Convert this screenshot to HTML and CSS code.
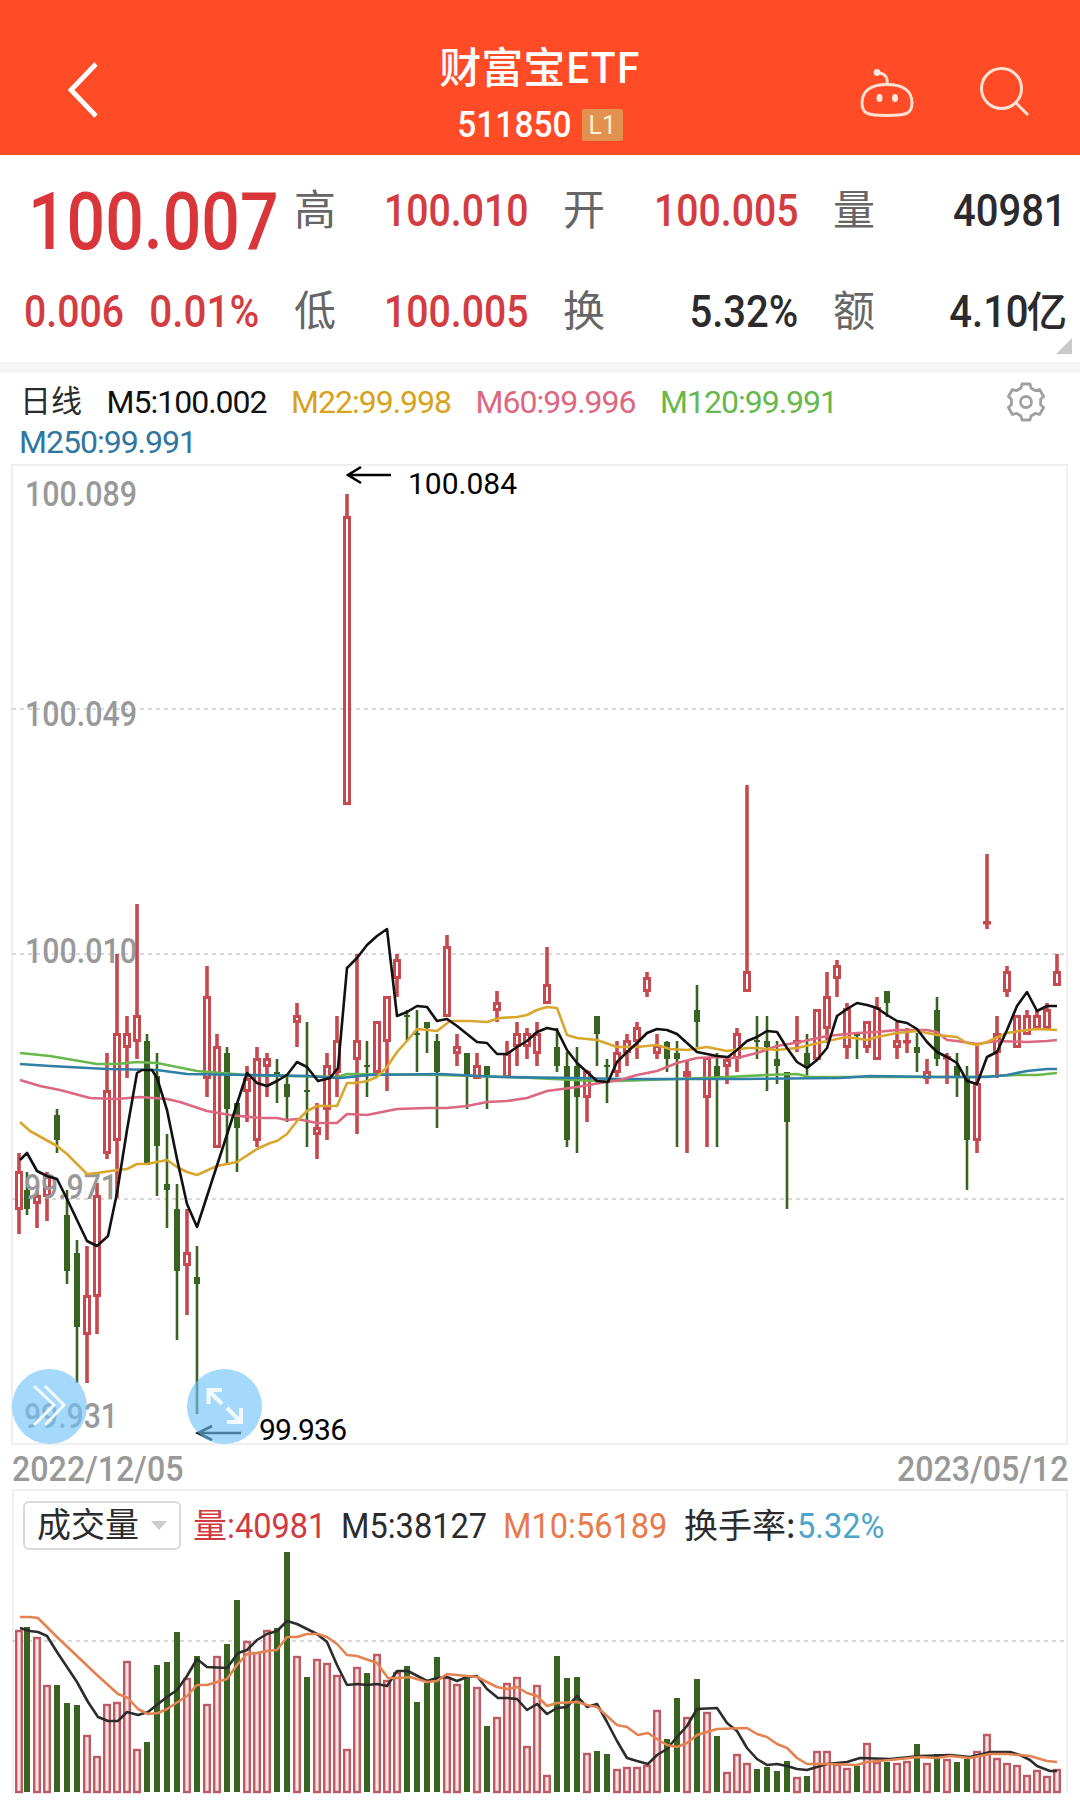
FILE: index.html
```html
<!DOCTYPE html>
<html lang="zh-CN">
<head>
  <meta charset="UTF-8" />
  <title>财富宝ETF 511850</title>
  <meta name="viewport" content="width=device-width, initial-scale=1" />
  <link rel="stylesheet" href="styles.css">
</head>
<body>
  <header class="topbar">
    <svg class="back" viewBox="0 0 36 58"><path d="M31 3 L6 29 L31 55" /></svg>
    <div class="title">
      <h1>财富宝ETF</h1>
      <div class="code"><span>511850</span><em>L1</em></div>
    </div>
    <div class="tools">
      <svg class="bot" viewBox="0 0 56 50">
        <path d="M28 17 C29 10 26 6 18 6" />
        <path d="M28 17.500 C44 17.500 53 24 53 36 C53 47 47 48.500 28 48.500 C9 48.500 3 47 3 36 C3 24 12 17.500 28 17.500 Z" />
        <circle class="dot" cx="18" cy="5.500" r="3.4" />
        <ellipse class="dot" cx="20.500" cy="31" rx="3" ry="4" />
        <ellipse class="dot" cx="36" cy="31" rx="3" ry="4" />
      </svg>
      <svg class="search" viewBox="0 0 52 52"><circle cx="22.500" cy="21.500" r="20" /><path d="M36.500 35.500 L49 48" /></svg>
    </div>
  </header>

  <section class="quote">
    <div class="price"><b>100.007</b></div>
    <div class="cell"><label>高</label><span class="num up">100.010</span></div>
    <div class="cell"><label>开</label><span class="num up">100.005</span></div>
    <div class="cell"><label>量</label><span class="num">40981</span></div>
    <div class="change"><span class="num up">0.006</span><span class="num up">0.01%</span></div>
    <div class="cell"><label>低</label><span class="num up">100.005</span></div>
    <div class="cell"><label>换</label><span class="num">5.32%</span></div>
    <div class="cell"><label>额</label><span class="num">4.10<i>亿</i></span></div>
    <span class="more"></span>
  </section>

  <section class="legend">
    <div class="names">
      <span class="period">日线</span>
      <span class="m5">M5:100.002</span>
      <span class="m22">M22:99.998</span>
      <span class="m60">M60:99.996</span>
      <span class="m120">M120:99.991</span>
      <span class="m250">M250:99.991</span>
    </div>
    <svg class="gear" viewBox="0 0 42 42">
      <path d="M17 3 H25 L26 7 L30.6 9.7 L34.6 8.5 L38.6 15.5 L35.6 18.3 V23.7 L38.6 26.5 L34.6 33.5 L30.6 32.3 L26 35 L25 39 H17 L16 35 L11.4 32.3 L7.4 33.5 L3.4 26.5 L6.4 23.7 V18.3 L3.4 15.5 L7.4 8.5 L11.4 9.7 L16 7 Z" />
      <circle cx="21" cy="21" r="5.5" />
    </svg>
  </section>

  <section class="kline">
    <svg id="kline" viewBox="0 464 1080 982">
      <rect class="frame" x="12" y="465" width="1055" height="979" />
      <path class="grid" d="M12 709 H1066 M12 954 H1066 M12 1199 H1066" />
      <g id="candles"></g>
      <g class="axis">
        <text x="25" y="506" textLength="112" lengthAdjust="spacingAndGlyphs">100.089</text>
        <text x="25" y="726" textLength="112" lengthAdjust="spacingAndGlyphs">100.049</text>
        <text x="25" y="963" textLength="112" lengthAdjust="spacingAndGlyphs">100.010</text>
        <text x="24" y="1199" textLength="94" lengthAdjust="spacingAndGlyphs">99.971</text>
        <text x="24" y="1428" textLength="94" lengthAdjust="spacingAndGlyphs">99.931</text>
      </g>
      <g id="averages"></g>
      <g class="mark">
        <path d="M391 475 H349 M361 467 L348 475 L361 483" />
        <path d="M241 1433 H199 M212 1426 L198 1433 L212 1440" />
        <text x="408" y="494" textLength="109">100.084</text>
        <text x="259" y="1440" textLength="88">99.936</text>
      </g>
      <g class="float">
        <circle cx="49.5" cy="1406.500" r="37.500" />
        <path d="M34 1386 L54 1405 L34 1425 M45 1386 L64 1405 L45 1425" />
        <circle cx="224.500" cy="1406.500" r="37.500" />
        <path class="thick" d="M208.500 1404 V1390 H222 M209 1391 L222 1404 M241 1408 V1422 H227 M240 1421 L227 1408" />
      </g>
    </svg>
  </section>

  <div class="dates"><span>2022/12/05</span><span>2023/05/12</span></div>

  <section class="volume">
    <div class="vol-head">
      <button class="picker">成交量</button>
      <span class="v-now"><i>量</i><b>:40981</b></span>
      <span class="v-m5"><b>M5:38127</b></span>
      <span class="v-m10"><b>M10:56189</b></span>
      <span class="v-rate"><i>换手率:</i><b>5.32%</b></span>
    </div>
    <svg id="volume" viewBox="12 1550 1056 244">
      <path class="grid" d="M12 1641 H1066" />
      <g id="bars"></g>
      <g id="volAverages"></g>
    </svg>
  </section>

  <script src="chart.js"></script>
</body>
</html>
```
FILE: styles.css
```css
* { box-sizing: border-box; }
body {
  margin: 0; width: 1080px; height: 1809px; overflow: hidden; background: #fff; color: #2b2b2d;
  font-family: Roboto, "Noto Sans CJK SC", sans-serif;
}
svg { display: block; fill: none; }
i, em { font-style: normal; }

.topbar {
  height: 155px; background: #ff4b26; color: #fff;
  display: grid; grid-template-columns: 300px 1fr 300px; align-items: start;
}
.back { width: 36px; height: 58px; margin: 61px 0 0 65px; stroke: #fff; stroke-width: 4.8; }
.title { text-align: center; padding-top: 35px; }
.title h1 {
  margin: 0 1px 0 0; font: 500 42px/60px "Noto Sans CJK SC", sans-serif;
}
.code { display: flex; justify-content: center; align-items: center; gap: 6px; height: 59px; margin-right: 4px; font-size: 36px; font-weight: 500; }
.code span { transform: scaleX(.93); }
.code em {
  width: 41px; height: 32px; line-height: 33px; background: #e2914e; color: #fff0d0;
  font-size: 25px; font-weight: 400; border-radius: 2px;
}
.tools { display: flex; gap: 64px; padding: 67px 0 0 79px; }
.tools svg { stroke: #ffe3d2; stroke-width: 3; }
.bot { width: 56px; height: 50px; }
.search { width: 52px; height: 52px; }
.tools .dot { fill: #ffe9dc; stroke: none; }

.quote {
  position: relative; height: 218px; padding: 4px 14px 0 25px; border-bottom: 11px solid #f5f5f5;
  display: grid; grid-template-columns: 233px 232px 233px 232px; column-gap: 37px;
  grid-template-rows: 101px 101px; align-items: center;
}
.cell, .change { display: flex; justify-content: space-between; align-items: center; height: 60px; }
.cell label { font: 400 42px/60px "Noto Sans CJK SC", sans-serif; color: #666; margin: -6px 0 0 -1px; }
.num { font-size: 43.5px; font-weight: 500; line-height: 60px; margin: 4px -1px 0 0; transform: scaleX(.92); transform-origin: right; white-space: nowrap; }
.num i { font-size: 42px; line-height: 50px; display: inline-block; transform: scaleX(1.05); transform-origin: right; }
.up { color: #d33c40; transform: scaleX(.9); }
.price b {
  display: block; width: 250px; margin: 25px 0 0 3px; color: #d8363a;
  font-size: 79px; font-weight: 500; line-height: 84px; transform: scaleX(.86); transform-origin: left;
}
.change .num { transform-origin: left; margin-left: -1px; }
.change .num + .num { transform-origin: right; transform: scaleX(.93); }
.more {
  position: absolute; right: 8px; bottom: 8px;
  border-left: 16px solid transparent; border-bottom: 16px solid #c9c9c9;
}

.legend { height: 91px; display: flex; justify-content: space-between; padding: 9px 33px 0 20px; }
.names { width: 900px; display: flex; flex-wrap: wrap; column-gap: 24.500px; font-size: 32px; line-height: 40px; letter-spacing: -1px; height: 78px; }
.period { font: 400 31px/39px "Noto Sans CJK SC", sans-serif; letter-spacing: 0; margin-top: -3px; }
.m5 { color: #111; }
.m22 { color: #d8a21b; }
.m60 { color: #dd6880; }
.m120 { color: #66b84d; }
.m250 { color: #2f76a0; margin-left: -1px; }
.gear { width: 42px; height: 42px; margin-top: -1px; stroke: #a0a0a0; stroke-width: 2.8; stroke-linejoin: round; }

.kline svg { width: 1080px; height: 982px; }
.frame { stroke: #efefef; stroke-width: 2; }
.grid { stroke: #d8d8d8; stroke-width: 2; stroke-dasharray: 4 4; }
.axis { fill: #999; font-size: 34.5px; font-weight: 500; }
.mark path { stroke: #000; stroke-width: 2.6; }
.mark text { fill: #000; font-size: 30px; }
.float circle { fill: #71c4fb; fill-opacity: .64; }
.float path { stroke: #f1faff; stroke-width: 3; }
.float .thick { stroke-width: 4; }
.up-line { stroke: #c7484e; stroke-width: 3.6; }
.up-body { stroke: #c7484e; stroke-width: 3; fill: #fff; }
.down-line { stroke: #386321; stroke-width: 2.6; }
.down-body { fill: #386321; }
.line { stroke-width: 2.6; stroke-linejoin: round; }
.line.m5 { stroke: #111; }
.line.m22 { stroke: #d9a62e; }
.line.m60 { stroke: #dc6780; }
.line.m120 { stroke: #69b84e; }
.line.m250 { stroke: #2f7fa6; }

.dates {
  height: 43px; padding: 0 12px; display: flex; justify-content: space-between;
  font-size: 35px; font-weight: 500; line-height: 48px; color: #999;
}
.dates span { transform: scaleX(.92); transform-origin: left; }
.dates span:last-child { transform-origin: right; }

.volume { margin-left: 12px; width: 1056px; height: 304px; border: 2px solid #efefef; border-bottom: 0; }
.vol-head { height: 59px; padding: 10px 0 0 9px; display: flex; align-items: flex-start; white-space: nowrap; }
.vol-head span { display: flex; }
.vol-head i { font: 400 34px/49px "Noto Sans CJK SC", sans-serif; margin-top: -2px; }
.vol-head b { font-size: 35px; font-weight: 400; line-height: 51px; transform: scaleX(.93); transform-origin: left; }
.picker {
  width: 158px; height: 49px; padding: 0 12px; border: 2px solid #d9d9d9; border-radius: 6px; background: #fff; color: #2b2b2d;
  font: 400 34px/40px "Noto Sans CJK SC", sans-serif; display: flex; justify-content: space-between; align-items: flex-start;
}
.picker::after { content: ""; margin-top: 18px; border: 8px solid transparent; border-top: 9px solid #ccc; border-bottom: 0; }
.v-now { width: 148px; margin-left: 12px; color: #d03a40; }
.v-m5 { width: 162px; }
.v-m10 { width: 181px; color: #e8794a; }
.v-rate b { color: #4ba4c9; margin-left: 2px; }
#volume { width: 1056px; height: 244px; margin-left: -2px; }
.vol-up { fill: #fbe3e1; stroke: #bd5a63; stroke-width: 2.4; }
.vol-down { fill: #386321; }
.line.v5 { stroke: #2c2c2c; }
.line.v10 { stroke: #e38352; }
```
FILE: chart.js
```js
const NS = "http://www.w3.org/2000/svg";

// u = up, d = down; high, body top, body bottom, low
const candles = `
u 1153 1171 1210 1234|d 1172 1190 1209 1215|u 1190 1195 1204 1228|u 1172 1176 1197 1221|d 1109 1115 1140 1153
d 1190 1215 1271 1284|d 1240 1253 1327 1383|u 1246 1295 1335 1383|u 1183 1195 1297 1334|u 1053 1090 1154 1159
u 954 1033 1141 1198|u 1016 1033 1048 1078|u 904 1015 1042 1059|d 1034 1041 1165 1165|d 1053 1076 1146 1196
d 1134 1184 1190 1228|d 1184 1209 1271 1340|u 1209 1252 1266 1315|d 1246 1277 1284 1414|u 966 996 1079 1097
u 1034 1046 1148 1148|d 1047 1053 1109 1163|d 1103 1103 1128 1172|u 1066 1078 1092 1122|u 1047 1058 1141 1147
u 1053 1058 1067 1097|d 1059 1072 1077 1103|d 1077 1084 1097 1122|u 1003 1015 1023 1047|d 1022 1090 1092 1147
u 1103 1127 1135 1159|u 1053 1065 1110 1140|u 1016 1040 1073 1097|u 494 516 805 805|u 954 1040 1060 1134
d 1041 1065 1067 1097|u 1021 1021 1073 1073|u 996 996 1042 1091|u 954 959 979 997|d 1010 1015 1017 1041
d 1010 1033 1035 1072|d 1022 1022 1028 1053|d 1034 1041 1072 1128|u 935 946 1017 1017|u 1034 1046 1054 1066
d 1053 1053 1077 1109|u 1053 1065 1079 1079|d 1066 1066 1075 1109|u 991 1002 1011 1022|u 1041 1053 1078 1078
u 1022 1033 1047 1066|u 1028 1033 1047 1059|u 1022 1033 1054 1066|u 947 984 1004 1004|d 1028 1047 1066 1072
d 1052 1066 1140 1147|d 1047 1066 1097 1153|u 1070 1071 1098 1122|d 1016 1016 1034 1066|d 1059 1065 1067 1103
u 1041 1052 1073 1077|u 1034 1040 1053 1066|u 1022 1027 1042 1059|u 972 977 992 997|u 1034 1045 1054 1059
d 1041 1042 1059 1072|d 1041 1053 1059 1147|u 1060 1071 1077 1153|d 985 1010 1022 1047|u 1057 1057 1098 1147
d 1053 1066 1077 1147|u 1057 1059 1067 1084|u 1028 1033 1059 1072|u 785 971 992 992|d 1016 1040 1042 1059
d 1016 1041 1047 1091|d 1041 1059 1066 1084|d 1072 1072 1122 1209|u 1016 1040 1042 1052|d 1034 1053 1068 1075
u 1009 1009 1060 1060|u 972 996 1029 1043|u 960 965 979 997|u 1003 1008 1048 1059|d 1032 1034 1036 1059
u 1021 1021 1048 1053|u 997 1007 1060 1060|d 991 991 1003 1017|u 1022 1040 1048 1059|u 1028 1040 1042 1053
d 1033 1047 1053 1072|u 1059 1071 1079 1084|d 997 1010 1059 1066|u 1053 1056 1058 1084|d 1053 1066 1077 1097
d 1066 1077 1140 1190|u 1044 1083 1141 1153|u 854 921 923 929|u 1016 1033 1053 1078|u 966 971 992 997
u 1015 1015 1048 1048|u 1010 1015 1035 1035|u 1010 1015 1029 1029|u 1003 1009 1029 1029|u 954 971 986 986`;

const averages = {
  m120: "20,1053 50,1056 97,1064 117,1064 137,1062 157,1063 177,1067 197,1071 247,1075 337,1077 347,1074 440,1075 510,1077 597,1081 617,1081 677,1079 727,1077 767,1075 797,1074 810,1077 860,1077 977,1077 1017,1075 1037,1075 1057,1073",
  m250: "20,1064 50,1066 107,1069 157,1070 187,1074 247,1075 307,1076 340,1078 370,1075 440,1074 500,1077 577,1078 620,1079 740,1079 840,1078 870,1076 940,1077 987,1077 1007,1075 1027,1071 1047,1069 1057,1069",
  m60: "20,1080 40,1086 60,1090 90,1098 117,1099 140,1097 167,1099 180,1102 207,1111 230,1115 260,1118 277,1118 287,1120 297,1119 317,1123 337,1123 347,1114 367,1115 397,1109 427,1108 447,1108 467,1106 487,1102 507,1101 527,1098 547,1091 577,1087 600,1083 620,1080 637,1075 657,1071 677,1063 697,1058 717,1057 737,1058 757,1053 777,1046 800,1042 827,1036 857,1033 877,1032 897,1030 927,1030 937,1032 947,1040 957,1041 977,1044 997,1041 1027,1042 1047,1041 1057,1040",
  m22: "20,1122 30,1131 57,1146 67,1154 87,1174 97,1173 117,1170 127,1169 137,1164 147,1164 167,1160 177,1167 187,1172 197,1175 217,1166 227,1164 237,1162 257,1149 270,1143 277,1141 287,1134 297,1121 307,1111 317,1106 337,1106 347,1083 357,1083 367,1081 377,1077 387,1067 397,1052 407,1041 417,1029 427,1030 437,1031 450,1021 470,1021 487,1022 500,1018 517,1017 527,1015 537,1010 547,1007 557,1008 567,1035 577,1038 597,1040 617,1047 637,1047 657,1045 670,1049 687,1050 707,1047 727,1051 747,1048 757,1048 777,1050 797,1048 810,1045 827,1041 847,1037 867,1040 877,1037 897,1033 917,1031 937,1035 957,1037 967,1043 977,1045 987,1042 1007,1033 1027,1030 1037,1029 1057,1030",
  m5: "20,1160 27,1153 37,1171 47,1176 57,1179 67,1199 77,1220 87,1241 97,1246 108,1236 117,1193 127,1130 137,1073 142,1070 152,1070 157,1078 167,1110 177,1159 187,1204 197,1227 247,1073 257,1083 267,1086 277,1081 287,1075 297,1062 307,1067 318,1081 330,1078 338,1068 347,968 357,958 367,945 377,936 387,929 397,1016 407,1012 417,1006 427,1007 437,1021 447,1019 457,1026 467,1034 477,1042 487,1043 497,1054 507,1054 517,1047 527,1041 537,1032 547,1028 557,1030 567,1050 577,1063 587,1072 597,1081 608,1082 617,1062 627,1052 637,1043 647,1033 657,1029 667,1030 677,1034 687,1043 697,1052 707,1054 717,1056 728,1057 737,1050 747,1041 757,1037 767,1031 777,1032 787,1048 797,1062 807,1068 817,1060 827,1048 837,1016 847,1009 857,1003 867,1005 877,1008 887,1015 897,1021 907,1023 917,1029 927,1042 937,1052 947,1057 957,1063 967,1081 977,1084 987,1057 997,1052 1007,1030 1017,1006 1027,992 1037,1011 1047,1006 1057,1006"
};

// top of every volume bar
const volumes = `u1630 d1627 u1637 u1685 d1685 d1703 d1705 u1735 u1756 u1704 u1702 u1661 u1749 d1742 d1665
d1662 d1632 u1678 d1656 u1704 u1656 d1644 d1600 u1641 u1652 u1630 d1628 d1552 u1656 d1677
u1659 u1663 u1675 u1749 u1667 d1673 u1654 u1680 u1672 d1666 d1702 d1683 d1657 u1677 u1684
d1678 u1687 d1726 u1717 u1683 u1677 u1746 u1685 u1775 d1656 d1678 d1677 u1753 d1751 d1754
u1769 u1767 u1767 u1765 u1710 d1739 d1698 u1717 d1679 u1712 d1736 u1772 u1754 u1763 d1769
d1767 d1771 d1761 u1777 d1776 u1751 u1751 u1764 u1768 d1766 u1743 u1762 d1762 u1763 u1761
d1744 u1763 d1754 u1759 d1762 d1759 u1751 u1734 u1758 u1763 u1765 u1775 u1770 u1776 u1769`;

const volAverages = {
  v5: "20,1628 30,1631 38,1632 47,1636 57,1652 67,1667 77,1682 88,1702 98,1717 108,1721 118,1721 127,1712 138,1715 148,1712 158,1704 167,1697 177,1690 187,1676 197,1659 207,1667 227,1668 238,1653 247,1650 257,1640 267,1634 277,1631 287,1621 297,1624 307,1629 317,1634 327,1642 337,1665 347,1685 357,1684 367,1685 377,1684 387,1686 397,1671 408,1671 427,1681 437,1678 447,1677 457,1681 467,1677 477,1676 487,1689 498,1698 507,1698 517,1699 527,1710 537,1704 547,1714 557,1708 567,1707 577,1696 587,1707 597,1704 607,1722 617,1741 627,1758 637,1761 648,1764 657,1755 667,1749 677,1737 687,1726 697,1709 717,1708 727,1723 737,1731 747,1748 757,1759 767,1765 777,1764 787,1766 797,1769 807,1770 817,1767 827,1764 847,1762 860,1758 890,1759 920,1756 950,1755 970,1757 990,1752 1010,1752 1020,1755 1030,1760 1037,1766 1050,1771 1057,1771",
  v10: "20,1617 30,1617 38,1618 57,1637 77,1656 97,1675 118,1694 128,1698 138,1709 148,1714 158,1713 167,1709 187,1696 197,1685 207,1685 227,1679 237,1665 247,1654 257,1653 267,1651 277,1650 287,1637 297,1637 307,1634 318,1634 327,1637 337,1644 347,1655 357,1656 377,1663 388,1678 400,1678 410,1677 427,1682 437,1681 447,1674 477,1677 497,1687 507,1689 517,1687 527,1693 537,1696 547,1706 557,1703 577,1702 587,1705 597,1707 617,1725 627,1727 638,1735 648,1733 657,1739 667,1745 677,1747 687,1743 697,1735 717,1729 747,1728 757,1734 767,1737 777,1744 787,1748 797,1758 807,1764 827,1764 857,1765 867,1762 890,1760 920,1757 937,1758 950,1756 970,1758 990,1754 1007,1754 1030,1756 1047,1761 1057,1762"
};

function add(parent, tag, attrs) {
  const el = document.createElementNS(NS, tag);
  for (let key in attrs) el.setAttribute(key, attrs[key]);
  document.getElementById(parent).appendChild(el);
}

function barX(i) {
  return i === 0 ? 19 : 17 + i * 10;
}

candles.trim().split(/[|\n]/).forEach((row, i) => {
  const [dir, ...values] = row.split(" ");
  const [high, top, bottom, low] = values.map(Number);
  const x = barX(i);
  if (dir === "d") {
    add("candles", "path", { class: "down-line", d: `M${x} ${high} V${low}` });
    add("candles", "rect", { class: "down-body", x: x - 3, y: top, width: 6, height: bottom - top });
  } else {
    add("candles", "path", { class: "up-line", d: `M${x} ${high} V${low}` });
    const h = Math.max(bottom - top - 3, 0.5);
    add("candles", "rect", { class: "up-body", x: x - 2.5, y: top + 1.5, width: 5, height: h });
  }
});

volumes.split(/\s+/).forEach((item, i) => {
  const x = barX(i);
  const top = Number(item.slice(1));
  if (item[0] === "d") {
    add("bars", "rect", { class: "vol-down", x: x - 3, y: top, width: 6, height: 1792 - top });
  } else {
    add("bars", "rect", { class: "vol-up", x: x - 2.8, y: top + 1, width: 5.6, height: 1791 - top });
  }
});

for (let name in averages) add("averages", "polyline", { class: `line ${name}`, points: averages[name] });
for (let name in volAverages) add("volAverages", "polyline", { class: `line ${name}`, points: volAverages[name] });
```
